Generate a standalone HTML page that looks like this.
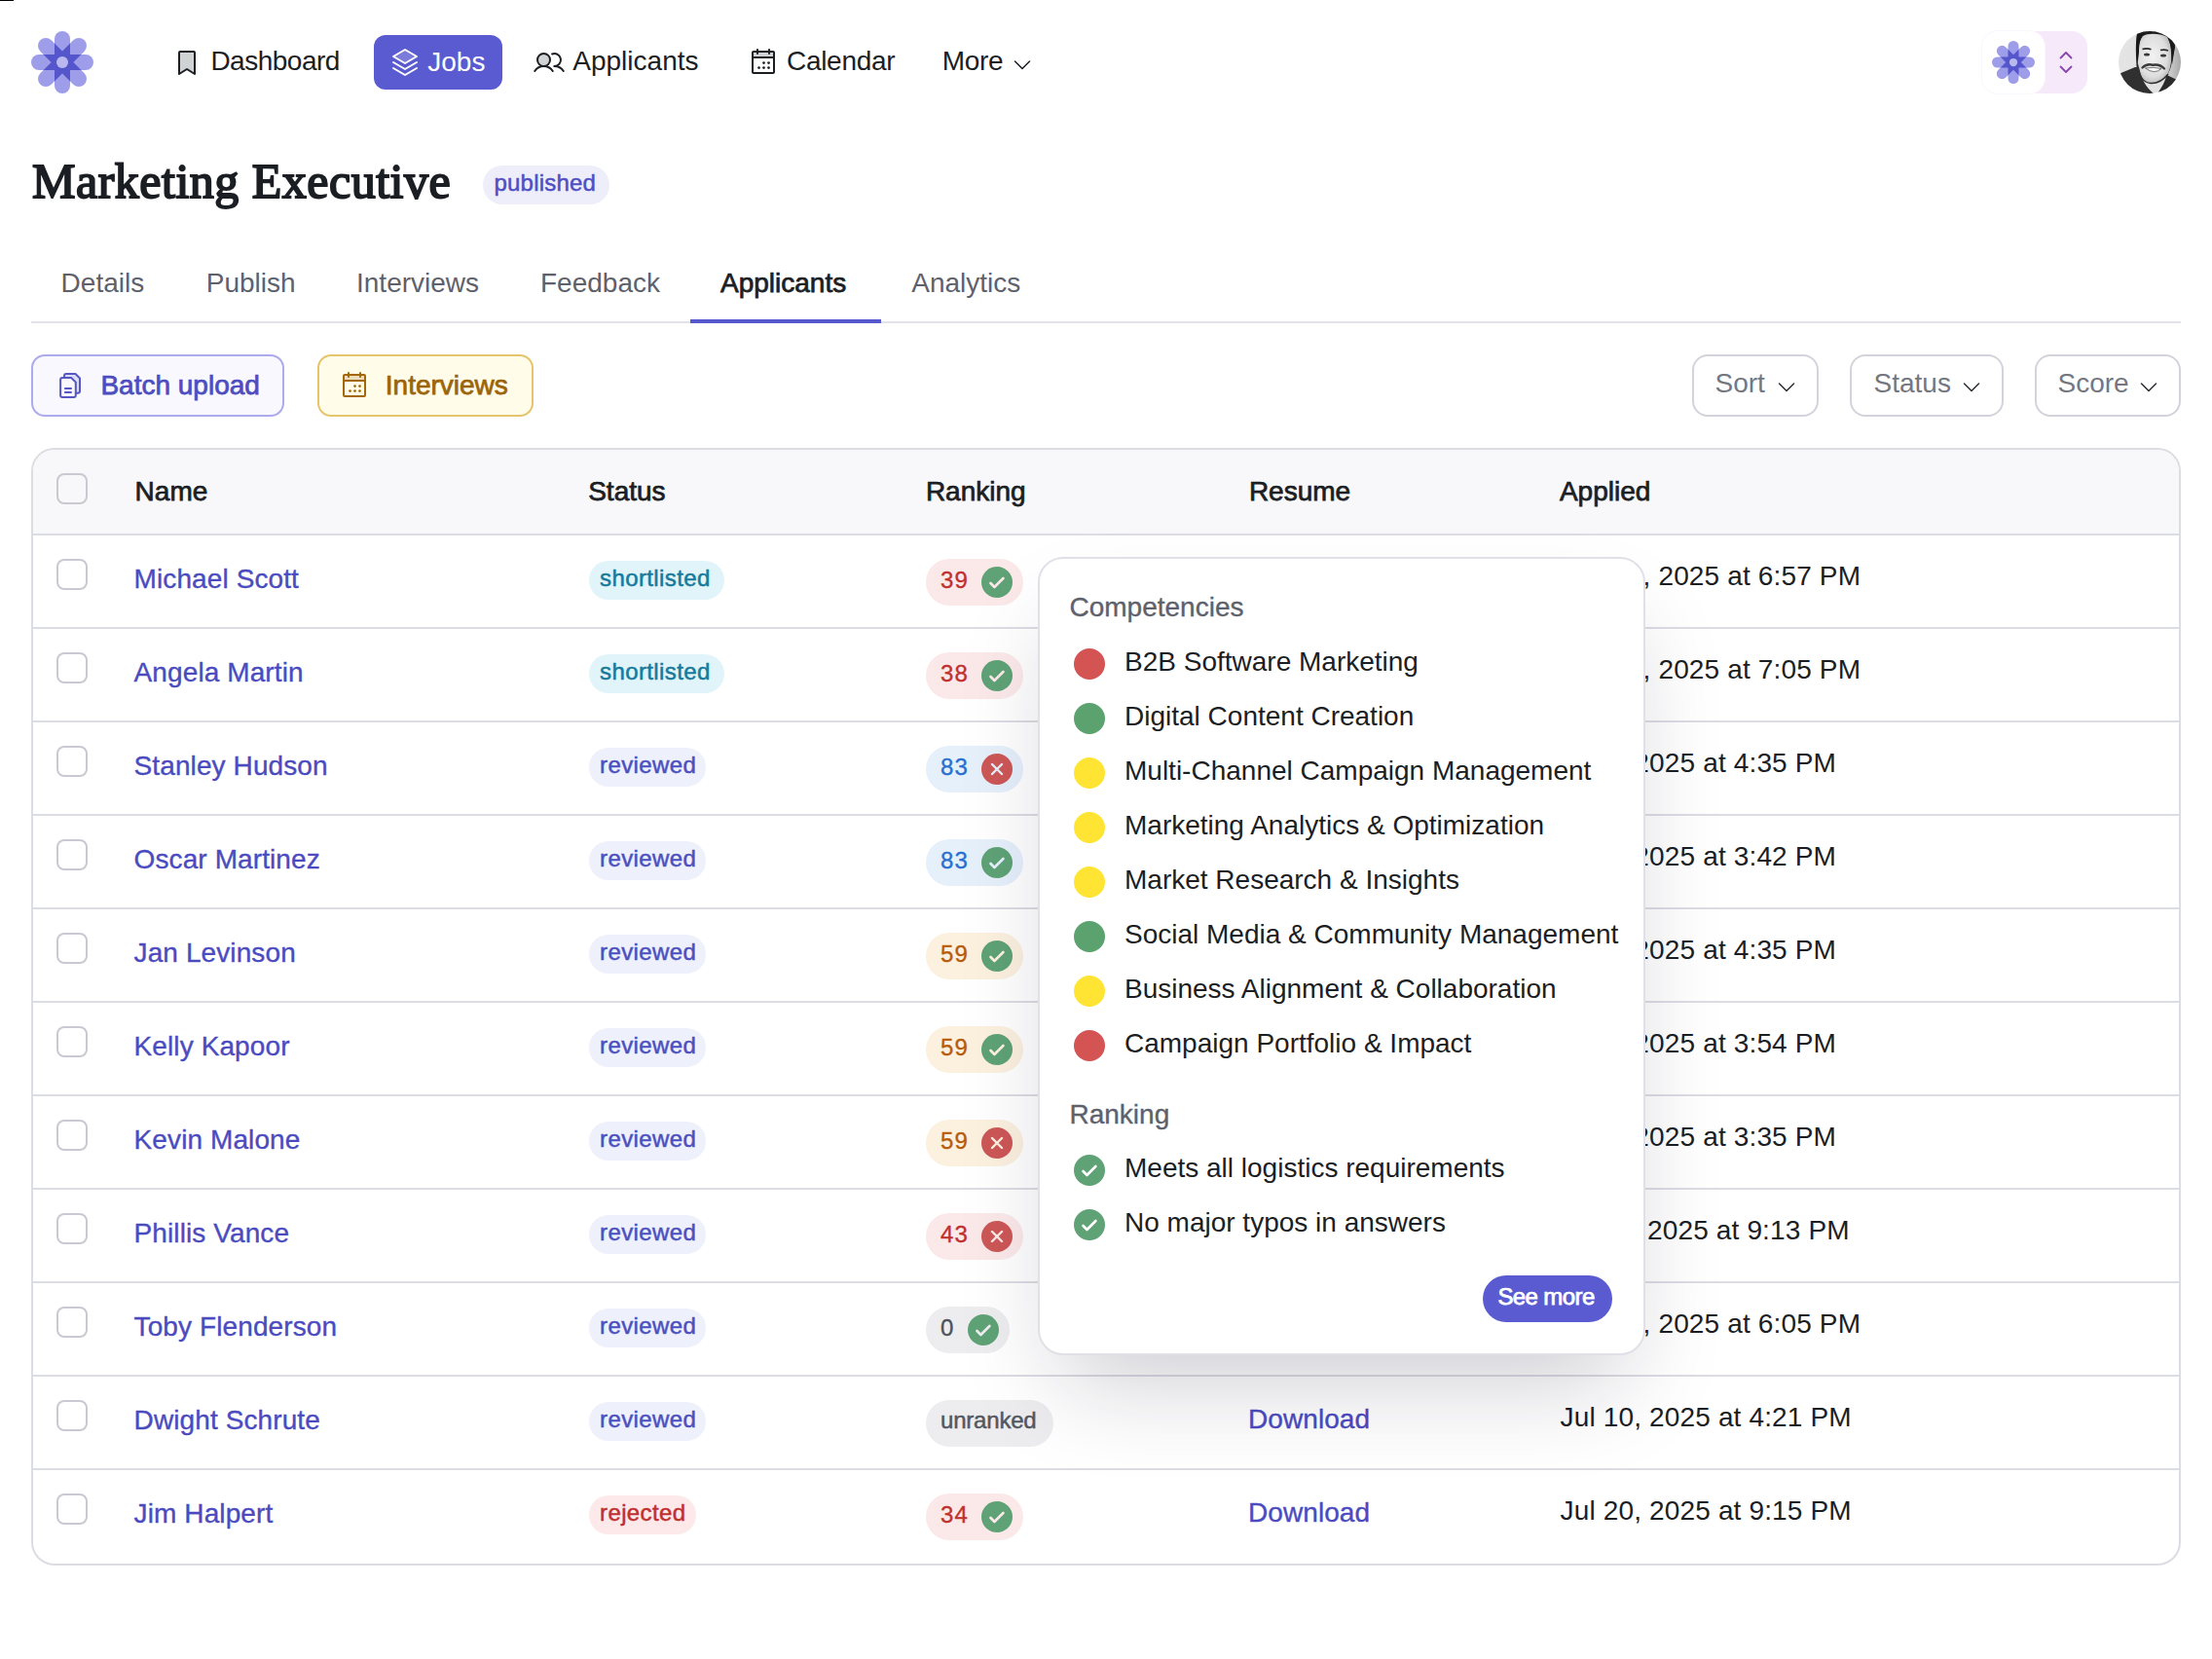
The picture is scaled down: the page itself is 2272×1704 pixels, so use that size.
<!DOCTYPE html>
<html><head><meta charset="utf-8"><title>Marketing Executive</title>
<style>
html,body{margin:0;padding:0;background:#fff;}
body{width:2272px;height:1704px;position:relative;overflow:hidden;font-family:"Liberation Sans", sans-serif;}
.t{position:absolute;white-space:nowrap;line-height:1;}
.b{position:absolute;}
@media (max-width:1200px){body{zoom:0.5;}}
</style></head><body>
<div class="b" style="left:0px;top:0px;width:14px;height:1px;background:#000"></div>
<svg class="b" style="left:30.0px;top:30.0px" width="68.0" height="68.0" viewBox="-34.0 -34.0 68.0 68.0"><defs><clipPath id="cL0"><rect x="-8" y="-32" width="16" height="64" rx="8" transform="rotate(0)"/></clipPath><clipPath id="cL45"><rect x="-8" y="-32" width="16" height="64" rx="8" transform="rotate(45)"/></clipPath><clipPath id="cL90"><rect x="-8" y="-32" width="16" height="64" rx="8" transform="rotate(90)"/></clipPath><clipPath id="cL135"><rect x="-8" y="-32" width="16" height="64" rx="8" transform="rotate(135)"/></clipPath></defs><g fill="#9d9de9"><rect x="-8" y="-32" width="16" height="64" rx="8" transform="rotate(0)"/><rect x="-8" y="-32" width="16" height="64" rx="8" transform="rotate(45)"/><rect x="-8" y="-32" width="16" height="64" rx="8" transform="rotate(90)"/><rect x="-8" y="-32" width="16" height="64" rx="8" transform="rotate(135)"/></g><g clip-path="url(#cL45)"><rect x="-8" y="-32" width="16" height="64" rx="8" transform="rotate(0)" fill="#5656cc"/></g><g clip-path="url(#cL90)"><rect x="-8" y="-32" width="16" height="64" rx="8" transform="rotate(0)" fill="#5656cc"/></g><g clip-path="url(#cL135)"><rect x="-8" y="-32" width="16" height="64" rx="8" transform="rotate(0)" fill="#5656cc"/></g><g clip-path="url(#cL90)"><rect x="-8" y="-32" width="16" height="64" rx="8" transform="rotate(45)" fill="#5656cc"/></g><g clip-path="url(#cL135)"><rect x="-8" y="-32" width="16" height="64" rx="8" transform="rotate(45)" fill="#5656cc"/></g><g clip-path="url(#cL135)"><rect x="-8" y="-32" width="16" height="64" rx="8" transform="rotate(90)" fill="#5656cc"/></g><circle r="6" fill="#b9b9f0"/></svg>
<div style="color:#1b1e23"><svg class="b" style="left:176px;top:48px" width="32" height="32" viewBox="0 0 256 256" fill="none" stroke="#1b1e23" stroke-width="16" stroke-linecap="round" stroke-linejoin="round"><path d="M192,224l-64-40L64,224V48a8,8,0,0,1,8-8H184a8,8,0,0,1,8,8Z" fill="currentColor" opacity="0.2" stroke="none"/><path d="M192,224l-64-40L64,224V48a8,8,0,0,1,8-8H184a8,8,0,0,1,8,8Z"/></svg>
</div><div class="t" style="left:216.4px;top:49.3px;font-size:28px;color:#1b1e23;letter-spacing:-0.5px">Dashboard</div>
<div class="b" style="left:384px;top:36px;width:132px;height:56px;background:#5b5bd1;border-radius:12px"></div>
<div style="color:#fff"><svg class="b" style="left:400px;top:48px" width="32" height="32" viewBox="0 0 256 256" fill="none" stroke="#fff" stroke-width="16" stroke-linecap="round" stroke-linejoin="round"><path d="M32,80,128,136l96-56L128,24Z" fill="currentColor" opacity="0.2" stroke="none"/><polyline points="32 176 128 232 224 176"/><polyline points="32 128 128 184 224 128"/><polygon points="32 80 128 136 224 80 128 24 32 80"/></svg>
</div><div class="t" style="left:439.3px;top:49.5px;font-size:28px;color:#fff;">Jobs</div>
<div style="color:#1b1e23"><svg class="b" style="left:548px;top:48px" width="32" height="32" viewBox="0 0 256 256" fill="none" stroke="#1b1e23" stroke-width="16" stroke-linecap="round" stroke-linejoin="round"><circle cx="84" cy="108" r="52" fill="currentColor" opacity="0.2" stroke="none"/><circle cx="84" cy="108" r="52"/><path d="M10.23,200a88,88,0,0,1,147.54,0"/><path d="M172,160a87.93,87.93,0,0,1,73.77,40"/><path d="M152.69,59.7A52,52,0,1,1,172,160"/></svg>
</div><div class="t" style="left:588.3px;top:49.3px;font-size:28px;color:#1b1e23;">Applicants</div>
<div style="color:#1b1e23"><svg class="b" style="left:768px;top:48px" width="32" height="32" viewBox="0 0 256 256" fill="none" stroke="#1b1e23" stroke-width="16" stroke-linecap="round" stroke-linejoin="round"><path d="M216,48V88H40V48a8,8,0,0,1,8-8H208A8,8,0,0,1,216,48Z" fill="currentColor" opacity="0.2" stroke="none"/><rect x="40" y="40" width="176" height="176" rx="8"/><line x1="176" y1="24" x2="176" y2="56"/><line x1="80" y1="24" x2="80" y2="56"/><line x1="40" y1="88" x2="216" y2="88"/><g fill="#1b1e23" stroke="none"><circle cx="132" cy="132" r="11"/><circle cx="172" cy="132" r="11"/><circle cx="92" cy="172" r="11"/><circle cx="132" cy="172" r="11"/><circle cx="172" cy="172" r="11"/></g></svg>
</div><div class="t" style="left:808.0px;top:49.3px;font-size:28px;color:#1b1e23;letter-spacing:-0.3px">Calendar</div>
<div class="t" style="left:967.7px;top:49.3px;font-size:28px;color:#1b1e23;letter-spacing:-0.3px">More</div>
<svg class="b" style="left:1038px;top:54px" width="24" height="24" viewBox="0 0 256 256" fill="none" stroke="#1b1e23" stroke-width="16" stroke-linecap="round" stroke-linejoin="round"><polyline points="208 96 128 176 48 96"/></svg>
<div class="b" style="left:2036px;top:32px;width:108px;height:64px;background:#f5e9fa;border-radius:16px"></div>
<div class="b" style="left:2036px;top:32px;width:64px;height:64px;background:#fff;border-radius:16px;box-shadow:0 0 0 1px #fbf6fd"></div>
<svg class="b" style="left:2044.0px;top:40.0px" width="48.0" height="48.0" viewBox="-34.90909090909091 -34.90909090909091 69.81818181818181 69.81818181818181"><defs><clipPath id="cS0"><rect x="-8" y="-32" width="16" height="64" rx="8" transform="rotate(0)"/></clipPath><clipPath id="cS45"><rect x="-8" y="-32" width="16" height="64" rx="8" transform="rotate(45)"/></clipPath><clipPath id="cS90"><rect x="-8" y="-32" width="16" height="64" rx="8" transform="rotate(90)"/></clipPath><clipPath id="cS135"><rect x="-8" y="-32" width="16" height="64" rx="8" transform="rotate(135)"/></clipPath></defs><g fill="#9d9de9"><rect x="-8" y="-32" width="16" height="64" rx="8" transform="rotate(0)"/><rect x="-8" y="-32" width="16" height="64" rx="8" transform="rotate(45)"/><rect x="-8" y="-32" width="16" height="64" rx="8" transform="rotate(90)"/><rect x="-8" y="-32" width="16" height="64" rx="8" transform="rotate(135)"/></g><g clip-path="url(#cS45)"><rect x="-8" y="-32" width="16" height="64" rx="8" transform="rotate(0)" fill="#5656cc"/></g><g clip-path="url(#cS90)"><rect x="-8" y="-32" width="16" height="64" rx="8" transform="rotate(0)" fill="#5656cc"/></g><g clip-path="url(#cS135)"><rect x="-8" y="-32" width="16" height="64" rx="8" transform="rotate(0)" fill="#5656cc"/></g><g clip-path="url(#cS90)"><rect x="-8" y="-32" width="16" height="64" rx="8" transform="rotate(45)" fill="#5656cc"/></g><g clip-path="url(#cS135)"><rect x="-8" y="-32" width="16" height="64" rx="8" transform="rotate(45)" fill="#5656cc"/></g><g clip-path="url(#cS135)"><rect x="-8" y="-32" width="16" height="64" rx="8" transform="rotate(90)" fill="#5656cc"/></g><circle r="6" fill="#b9b9f0"/></svg>
<svg class="b" style="left:2108px;top:48px" width="28" height="32" viewBox="0 0 28 32" fill="none" stroke="#8a45ad" stroke-width="1.8" stroke-linecap="round" stroke-linejoin="round"><polyline points="8.5,11.5 14,6 19.5,11.5"/><polyline points="8.5,20.5 14,26 19.5,20.5"/></svg>
<svg class="b" style="left:2176px;top:32px" width="64" height="64" viewBox="0 0 64 64">
<defs><clipPath id="av"><circle cx="32" cy="32" r="32"/></clipPath>
<linearGradient id="avbg" x1="0" y1="0" x2="1" y2="0"><stop offset="0" stop-color="#e4e4e4"/><stop offset="0.7" stop-color="#e2e2e2"/><stop offset="1" stop-color="#a8a8a8"/></linearGradient>
<radialGradient id="face" cx="0.45" cy="0.45" r="0.6"><stop offset="0" stop-color="#f2f2f2"/><stop offset="0.7" stop-color="#dedede"/><stop offset="1" stop-color="#b5b5b5"/></radialGradient></defs>
<g clip-path="url(#av)">
<rect width="64" height="64" fill="url(#avbg)"/>
<path d="M19,2 C22,0 30,-1 38,0 C46,1 53,5 58,14 C57,22 55,30 54,36 C52,42 50,46 48,48 L19,42 C18,30 17,14 19,2Z" fill="#1e1e1e"/>
<path d="M25,5 C30,2 42,2 50,6 C54,12 55,22 54,32 C53,40 50,48 44,52 C40,54 34,54 29,52 C23,48 20,40 19.5,30 C19,20 21,10 25,5Z" fill="url(#face)"/>
<path d="M25,3 L19,4 L18,20 L19.5,34 L21,22 C21,14 22,8 25,3Z" fill="#1a1a1a"/>
<path d="M50,6 C54,10 57,14 58,16 L55,34 L54,22 C54,14 52,10 50,6Z" fill="#1a1a1a"/>
<path d="M24.5,18.6 Q29,17 33.5,18.8" stroke="#2a2a2a" stroke-width="1.6" fill="none"/>
<path d="M43,19.6 Q47,18.5 51,20" stroke="#2a2a2a" stroke-width="1.6" fill="none"/>
<ellipse cx="29" cy="24" rx="3" ry="1.5" fill="#3a3a3a"/><ellipse cx="46" cy="25" rx="3" ry="1.5" fill="#3a3a3a"/>
<path d="M27.5,38 Q36,36.5 44,38.5 Q37,45 27.5,38Z" fill="#fafafa" stroke="#555" stroke-width="0.8"/>
<path d="M24.5,37.5 Q29,33 35.5,34.8 Q42,33.5 47,38.5" stroke="#3a3a3a" stroke-width="2.4" fill="none" stroke-linecap="round"/>
<path d="M19.5,34 C21,46 26,53 33,53.5 C40,54 46,50 51,44" stroke="#2c2c2c" stroke-width="1.4" fill="none"/>
<path d="M0,44 L17,37 L21,37 C23,48 28,58 36,64 L0,64Z" fill="#303030"/>
<path d="M40,64 C44,58 48,52 49.5,45 L58,49 L64,52 L64,64Z" fill="#2a2a2a"/>
</g></svg>
<div class="t" style="left:33px;top:160.9px;font-family:'Liberation Serif',serif;font-size:50px;letter-spacing:0.5px;-webkit-text-stroke:1.9px #1b1e23;color:#1b1e23">Marketing Executive</div>
<div class="b" style="left:496px;top:170px;width:130px;height:40px;background:#eeeefb;border-radius:20px"></div>
<div class="t" style="left:507.5px;top:176.0px;font-size:24px;-webkit-text-stroke:0.5px #4f4fc4;color:#4f4fc4;letter-spacing:0.2px">published</div>
<div class="t" style="left:62.6px;top:277.0px;font-size:28px;color:#5e616b;">Details</div>
<div class="t" style="left:211.8px;top:277.0px;font-size:28px;color:#5e616b;">Publish</div>
<div class="t" style="left:366.0px;top:277.0px;font-size:28px;color:#5e616b;">Interviews</div>
<div class="t" style="left:555.0px;top:277.0px;font-size:28px;color:#5e616b;">Feedback</div>
<div class="t" style="left:936.3px;top:277.0px;font-size:28px;color:#5e616b;">Analytics</div>
<div class="t" style="left:740.0px;top:277.0px;font-size:28px;-webkit-text-stroke:0.75px #1b1e23;color:#1b1e23;">Applicants</div>
<div class="b" style="left:32px;top:330px;width:2208px;height:2px;background:#e2e2e8"></div>
<div class="b" style="left:709px;top:328px;width:196px;height:4px;background:#5757ce"></div>
<div class="b" style="left:32px;top:364px;width:260px;height:64px;background:#f8f8fe;border:2px solid #ababee;box-sizing:border-box;border-radius:14px"></div>
<svg class="b" style="left:56px;top:378px" width="32" height="32" viewBox="56 378 32 32" fill="none" stroke="#5656c4" stroke-width="2" stroke-linecap="round" stroke-linejoin="round"><path d="M66,388 V386 a2,2 0 0 1 2,-2 H77.5 L82,388.5 V401.8 a2,2 0 0 1 -2,2 H77.8 V392.6 L73.2,388 Z" fill="#dcdcf4" stroke="none"/><path d="M66,388 V386 a2,2 0 0 1 2,-2 H77.5 L82,388.5 V401.8 a2,2 0 0 1 -2,2 H77.8"/><path d="M73.2,388 H64.1 a2,2 0 0 0 -2,2 V405.9 a2,2 0 0 0 2,2 H75.8 a2,2 0 0 0 2,-2 V392.6 Z"/><line x1="66.9" y1="398.9" x2="73" y2="398.9"/><line x1="66.9" y1="403" x2="73" y2="403"/></svg>
<div class="t" style="left:103.4px;top:381.9px;font-size:28px;-webkit-text-stroke:0.75px #4d4dbf;color:#4d4dbf;">Batch upload</div>
<div class="b" style="left:326px;top:364px;width:222px;height:64px;background:#fffce9;border:2px solid #e6c46a;box-sizing:border-box;border-radius:14px"></div>
<div style="color:#a2680a"><svg class="b" style="left:348px;top:380px" width="32" height="32" viewBox="0 0 256 256" fill="none" stroke="#a2680a" stroke-width="16" stroke-linecap="round" stroke-linejoin="round"><path d="M216,48V88H40V48a8,8,0,0,1,8-8H208A8,8,0,0,1,216,48Z" fill="currentColor" opacity="0.2" stroke="none"/><rect x="40" y="40" width="176" height="176" rx="8"/><line x1="176" y1="24" x2="176" y2="56"/><line x1="80" y1="24" x2="80" y2="56"/><line x1="40" y1="88" x2="216" y2="88"/><g fill="#a2680a" stroke="none"><circle cx="132" cy="132" r="11"/><circle cx="172" cy="132" r="11"/><circle cx="92" cy="172" r="11"/><circle cx="132" cy="172" r="11"/><circle cx="172" cy="172" r="11"/></g></svg>
</div><div class="t" style="left:395.8px;top:381.9px;font-size:28px;-webkit-text-stroke:0.75px #9c6408;color:#9c6408;">Interviews</div>
<div class="b" style="left:1738px;top:364px;width:130px;height:64px;background:#fff;border:2px solid #d3d3db;box-sizing:border-box;border-radius:16px"></div>
<div class="t" style="left:1761.5px;top:380.1px;font-size:28px;color:#74777f;">Sort</div>
<svg class="b" style="left:1823px;top:385px" width="24" height="24" viewBox="0 0 256 256" fill="none" stroke="#2b2e34" stroke-width="16" stroke-linecap="round" stroke-linejoin="round"><polyline points="208 96 128 176 48 96"/></svg>
<div class="b" style="left:1900px;top:364px;width:158px;height:64px;background:#fff;border:2px solid #d3d3db;box-sizing:border-box;border-radius:16px"></div>
<div class="t" style="left:1924.5px;top:380.1px;font-size:28px;color:#74777f;">Status</div>
<svg class="b" style="left:2013px;top:385px" width="24" height="24" viewBox="0 0 256 256" fill="none" stroke="#2b2e34" stroke-width="16" stroke-linecap="round" stroke-linejoin="round"><polyline points="208 96 128 176 48 96"/></svg>
<div class="b" style="left:2090px;top:364px;width:150px;height:64px;background:#fff;border:2px solid #d3d3db;box-sizing:border-box;border-radius:16px"></div>
<div class="t" style="left:2113.5px;top:380.1px;font-size:28px;color:#74777f;">Score</div>
<svg class="b" style="left:2195px;top:385px" width="24" height="24" viewBox="0 0 256 256" fill="none" stroke="#2b2e34" stroke-width="16" stroke-linecap="round" stroke-linejoin="round"><polyline points="208 96 128 176 48 96"/></svg>
<div class="b" style="left:32px;top:460px;width:2208px;height:1148px;background:#fff;border:2px solid #dcdce3;box-sizing:border-box;border-radius:24px;overflow:hidden"></div>
<div class="b" style="left:34px;top:462px;width:2204px;height:86px;background:#f8f8fa;border-radius:22px 22px 0 0"></div>
<div class="b" style="left:34px;top:548px;width:2204px;height:2px;background:#dcdce3"></div>
<div class="b" style="left:58px;top:486px;width:32px;height:32px;border:2px solid #c9c9d2;box-sizing:border-box;border-radius:8px;background:transparent"></div>
<div class="t" style="left:138.6px;top:490.5px;font-size:28px;-webkit-text-stroke:0.75px #1b1e23;color:#1b1e23;">Name</div>
<div class="t" style="left:604.2px;top:490.5px;font-size:28px;-webkit-text-stroke:0.75px #1b1e23;color:#1b1e23;">Status</div>
<div class="t" style="left:950.9px;top:490.5px;font-size:28px;-webkit-text-stroke:0.75px #1b1e23;color:#1b1e23;">Ranking</div>
<div class="t" style="left:1282.9px;top:490.5px;font-size:28px;-webkit-text-stroke:0.75px #1b1e23;color:#1b1e23;">Resume</div>
<div class="t" style="left:1601.9px;top:490.5px;font-size:28px;-webkit-text-stroke:0.75px #1b1e23;color:#1b1e23;">Applied</div>
<div class="b" style="left:34px;top:644px;width:2204px;height:2px;background:#dcdce3"></div>
<div class="b" style="left:58px;top:574px;width:32px;height:32px;border:2px solid #c9c9d2;box-sizing:border-box;border-radius:8px;background:#fff"></div>
<div class="t" style="left:137.6px;top:580.7px;font-size:28px;-webkit-text-stroke:0.35px #4b4bc0;color:#4b4bc0;letter-spacing:0.1px">Michael Scott</div>
<div class="b" style="left:605px;top:576px;width:139px;height:40px;background:#e1f4f9;border-radius:20px"></div>
<div class="t" style="left:616.0px;top:581.6px;font-size:24px;-webkit-text-stroke:0.5px #167a9c;color:#167a9c;letter-spacing:0.4px">shortlisted</div>
<div class="b" style="left:951px;top:574px;width:100px;height:48px;background:#fbe9ea;border-radius:24px"></div>
<div class="t" style="left:966.1px;top:584.0px;font-size:24px;-webkit-text-stroke:0.35px #c0302f;color:#c0302f;letter-spacing:1px">39</div>
<svg class="b" style="left:1007.6px;top:582px" width="32" height="32" viewBox="0 0 32 32"><circle cx="16" cy="16" r="16" fill="#5fa276"/><polyline points="9.5,17 13.4,21 22.4,12" fill="none" stroke="#fbe9ea" stroke-width="2.6" stroke-linecap="round" stroke-linejoin="round"/></svg>
<div class="t" style="left:1602.6px;top:578.3px;font-size:28px;color:#1b1e23;letter-spacing:0.15px">Jun 14, 2025 at 6:57 PM</div>
<div class="b" style="left:34px;top:740px;width:2204px;height:2px;background:#dcdce3"></div>
<div class="b" style="left:58px;top:670px;width:32px;height:32px;border:2px solid #c9c9d2;box-sizing:border-box;border-radius:8px;background:#fff"></div>
<div class="t" style="left:137.6px;top:676.7px;font-size:28px;-webkit-text-stroke:0.35px #4b4bc0;color:#4b4bc0;letter-spacing:0.1px">Angela Martin</div>
<div class="b" style="left:605px;top:672px;width:139px;height:40px;background:#e1f4f9;border-radius:20px"></div>
<div class="t" style="left:616.0px;top:677.6px;font-size:24px;-webkit-text-stroke:0.5px #167a9c;color:#167a9c;letter-spacing:0.4px">shortlisted</div>
<div class="b" style="left:951px;top:670px;width:100px;height:48px;background:#fbe9ea;border-radius:24px"></div>
<div class="t" style="left:966.1px;top:680.0px;font-size:24px;-webkit-text-stroke:0.35px #c0302f;color:#c0302f;letter-spacing:1px">38</div>
<svg class="b" style="left:1007.6px;top:678px" width="32" height="32" viewBox="0 0 32 32"><circle cx="16" cy="16" r="16" fill="#5fa276"/><polyline points="9.5,17 13.4,21 22.4,12" fill="none" stroke="#fbe9ea" stroke-width="2.6" stroke-linecap="round" stroke-linejoin="round"/></svg>
<div class="t" style="left:1602.6px;top:674.3px;font-size:28px;color:#1b1e23;letter-spacing:0.15px">Jun 14, 2025 at 7:05 PM</div>
<div class="b" style="left:34px;top:836px;width:2204px;height:2px;background:#dcdce3"></div>
<div class="b" style="left:58px;top:766px;width:32px;height:32px;border:2px solid #c9c9d2;box-sizing:border-box;border-radius:8px;background:#fff"></div>
<div class="t" style="left:137.6px;top:772.7px;font-size:28px;-webkit-text-stroke:0.35px #4b4bc0;color:#4b4bc0;letter-spacing:0.1px">Stanley Hudson</div>
<div class="b" style="left:605px;top:768px;width:120px;height:40px;background:#eef0fc;border-radius:20px"></div>
<div class="t" style="left:616.0px;top:773.6px;font-size:24px;-webkit-text-stroke:0.5px #4b50c0;color:#4b50c0;letter-spacing:0.4px">reviewed</div>
<div class="b" style="left:951px;top:766px;width:100px;height:48px;background:#e6f0fb;border-radius:24px"></div>
<div class="t" style="left:966.1px;top:776.0px;font-size:24px;-webkit-text-stroke:0.35px #2a6fd0;color:#2a6fd0;letter-spacing:1px">83</div>
<svg class="b" style="left:1007.6px;top:774px" width="32" height="32" viewBox="0 0 32 32"><circle cx="16" cy="16" r="16" fill="#cd5757"/><path d="M11,11 L21,21 M21,11 L11,21" fill="none" stroke="#e6f0fb" stroke-width="2.4" stroke-linecap="round"/></svg>
<div class="t" style="left:1602.6px;top:770.3px;font-size:28px;color:#1b1e23;letter-spacing:0.15px">Jul 9, 2025 at 4:35 PM</div>
<div class="b" style="left:34px;top:932px;width:2204px;height:2px;background:#dcdce3"></div>
<div class="b" style="left:58px;top:862px;width:32px;height:32px;border:2px solid #c9c9d2;box-sizing:border-box;border-radius:8px;background:#fff"></div>
<div class="t" style="left:137.6px;top:868.7px;font-size:28px;-webkit-text-stroke:0.35px #4b4bc0;color:#4b4bc0;letter-spacing:0.1px">Oscar Martinez</div>
<div class="b" style="left:605px;top:864px;width:120px;height:40px;background:#eef0fc;border-radius:20px"></div>
<div class="t" style="left:616.0px;top:869.6px;font-size:24px;-webkit-text-stroke:0.5px #4b50c0;color:#4b50c0;letter-spacing:0.4px">reviewed</div>
<div class="b" style="left:951px;top:862px;width:100px;height:48px;background:#e6f0fb;border-radius:24px"></div>
<div class="t" style="left:966.1px;top:872.0px;font-size:24px;-webkit-text-stroke:0.35px #2a6fd0;color:#2a6fd0;letter-spacing:1px">83</div>
<svg class="b" style="left:1007.6px;top:870px" width="32" height="32" viewBox="0 0 32 32"><circle cx="16" cy="16" r="16" fill="#5fa276"/><polyline points="9.5,17 13.4,21 22.4,12" fill="none" stroke="#e6f0fb" stroke-width="2.6" stroke-linecap="round" stroke-linejoin="round"/></svg>
<div class="t" style="left:1602.6px;top:866.3px;font-size:28px;color:#1b1e23;letter-spacing:0.15px">Jul 9, 2025 at 3:42 PM</div>
<div class="b" style="left:34px;top:1028px;width:2204px;height:2px;background:#dcdce3"></div>
<div class="b" style="left:58px;top:958px;width:32px;height:32px;border:2px solid #c9c9d2;box-sizing:border-box;border-radius:8px;background:#fff"></div>
<div class="t" style="left:137.6px;top:964.7px;font-size:28px;-webkit-text-stroke:0.35px #4b4bc0;color:#4b4bc0;letter-spacing:0.1px">Jan Levinson</div>
<div class="b" style="left:605px;top:960px;width:120px;height:40px;background:#eef0fc;border-radius:20px"></div>
<div class="t" style="left:616.0px;top:965.6px;font-size:24px;-webkit-text-stroke:0.5px #4b50c0;color:#4b50c0;letter-spacing:0.4px">reviewed</div>
<div class="b" style="left:951px;top:958px;width:100px;height:48px;background:#fcf0df;border-radius:24px"></div>
<div class="t" style="left:966.1px;top:968.0px;font-size:24px;-webkit-text-stroke:0.35px #b85c0a;color:#b85c0a;letter-spacing:1px">59</div>
<svg class="b" style="left:1007.6px;top:966px" width="32" height="32" viewBox="0 0 32 32"><circle cx="16" cy="16" r="16" fill="#5fa276"/><polyline points="9.5,17 13.4,21 22.4,12" fill="none" stroke="#fcf0df" stroke-width="2.6" stroke-linecap="round" stroke-linejoin="round"/></svg>
<div class="t" style="left:1602.6px;top:962.3px;font-size:28px;color:#1b1e23;letter-spacing:0.15px">Jul 9, 2025 at 4:35 PM</div>
<div class="b" style="left:34px;top:1124px;width:2204px;height:2px;background:#dcdce3"></div>
<div class="b" style="left:58px;top:1054px;width:32px;height:32px;border:2px solid #c9c9d2;box-sizing:border-box;border-radius:8px;background:#fff"></div>
<div class="t" style="left:137.6px;top:1060.7px;font-size:28px;-webkit-text-stroke:0.35px #4b4bc0;color:#4b4bc0;letter-spacing:0.1px">Kelly Kapoor</div>
<div class="b" style="left:605px;top:1056px;width:120px;height:40px;background:#eef0fc;border-radius:20px"></div>
<div class="t" style="left:616.0px;top:1061.6px;font-size:24px;-webkit-text-stroke:0.5px #4b50c0;color:#4b50c0;letter-spacing:0.4px">reviewed</div>
<div class="b" style="left:951px;top:1054px;width:100px;height:48px;background:#fcf0df;border-radius:24px"></div>
<div class="t" style="left:966.1px;top:1064.0px;font-size:24px;-webkit-text-stroke:0.35px #b85c0a;color:#b85c0a;letter-spacing:1px">59</div>
<svg class="b" style="left:1007.6px;top:1062px" width="32" height="32" viewBox="0 0 32 32"><circle cx="16" cy="16" r="16" fill="#5fa276"/><polyline points="9.5,17 13.4,21 22.4,12" fill="none" stroke="#fcf0df" stroke-width="2.6" stroke-linecap="round" stroke-linejoin="round"/></svg>
<div class="t" style="left:1602.6px;top:1058.3px;font-size:28px;color:#1b1e23;letter-spacing:0.15px">Jul 9, 2025 at 3:54 PM</div>
<div class="b" style="left:34px;top:1220px;width:2204px;height:2px;background:#dcdce3"></div>
<div class="b" style="left:58px;top:1150px;width:32px;height:32px;border:2px solid #c9c9d2;box-sizing:border-box;border-radius:8px;background:#fff"></div>
<div class="t" style="left:137.6px;top:1156.7px;font-size:28px;-webkit-text-stroke:0.35px #4b4bc0;color:#4b4bc0;letter-spacing:0.1px">Kevin Malone</div>
<div class="b" style="left:605px;top:1152px;width:120px;height:40px;background:#eef0fc;border-radius:20px"></div>
<div class="t" style="left:616.0px;top:1157.6px;font-size:24px;-webkit-text-stroke:0.5px #4b50c0;color:#4b50c0;letter-spacing:0.4px">reviewed</div>
<div class="b" style="left:951px;top:1150px;width:100px;height:48px;background:#fcf0df;border-radius:24px"></div>
<div class="t" style="left:966.1px;top:1160.0px;font-size:24px;-webkit-text-stroke:0.35px #b85c0a;color:#b85c0a;letter-spacing:1px">59</div>
<svg class="b" style="left:1007.6px;top:1158px" width="32" height="32" viewBox="0 0 32 32"><circle cx="16" cy="16" r="16" fill="#cd5757"/><path d="M11,11 L21,21 M21,11 L11,21" fill="none" stroke="#fcf0df" stroke-width="2.4" stroke-linecap="round"/></svg>
<div class="t" style="left:1602.6px;top:1154.3px;font-size:28px;color:#1b1e23;letter-spacing:0.15px">Jul 9, 2025 at 3:35 PM</div>
<div class="b" style="left:34px;top:1316px;width:2204px;height:2px;background:#dcdce3"></div>
<div class="b" style="left:58px;top:1246px;width:32px;height:32px;border:2px solid #c9c9d2;box-sizing:border-box;border-radius:8px;background:#fff"></div>
<div class="t" style="left:137.6px;top:1252.7px;font-size:28px;-webkit-text-stroke:0.35px #4b4bc0;color:#4b4bc0;letter-spacing:0.1px">Phillis Vance</div>
<div class="b" style="left:605px;top:1248px;width:120px;height:40px;background:#eef0fc;border-radius:20px"></div>
<div class="t" style="left:616.0px;top:1253.6px;font-size:24px;-webkit-text-stroke:0.5px #4b50c0;color:#4b50c0;letter-spacing:0.4px">reviewed</div>
<div class="b" style="left:951px;top:1246px;width:100px;height:48px;background:#fbe9ea;border-radius:24px"></div>
<div class="t" style="left:966.1px;top:1256.0px;font-size:24px;-webkit-text-stroke:0.35px #c0302f;color:#c0302f;letter-spacing:1px">43</div>
<svg class="b" style="left:1007.6px;top:1254px" width="32" height="32" viewBox="0 0 32 32"><circle cx="16" cy="16" r="16" fill="#cd5757"/><path d="M11,11 L21,21 M21,11 L11,21" fill="none" stroke="#fbe9ea" stroke-width="2.4" stroke-linecap="round"/></svg>
<div class="t" style="left:1602.6px;top:1250.3px;font-size:28px;color:#1b1e23;letter-spacing:0.15px">Jul 11, 2025 at 9:13 PM</div>
<div class="b" style="left:34px;top:1412px;width:2204px;height:2px;background:#dcdce3"></div>
<div class="b" style="left:58px;top:1342px;width:32px;height:32px;border:2px solid #c9c9d2;box-sizing:border-box;border-radius:8px;background:#fff"></div>
<div class="t" style="left:137.6px;top:1348.7px;font-size:28px;-webkit-text-stroke:0.35px #4b4bc0;color:#4b4bc0;letter-spacing:0.1px">Toby Flenderson</div>
<div class="b" style="left:605px;top:1344px;width:120px;height:40px;background:#eef0fc;border-radius:20px"></div>
<div class="t" style="left:616.0px;top:1349.6px;font-size:24px;-webkit-text-stroke:0.5px #4b50c0;color:#4b50c0;letter-spacing:0.4px">reviewed</div>
<div class="b" style="left:951px;top:1342px;width:86px;height:48px;background:#ededf0;border-radius:24px"></div>
<div class="t" style="left:966.1px;top:1352.0px;font-size:24px;-webkit-text-stroke:0.35px #4f525b;color:#4f525b;letter-spacing:1px">0</div>
<svg class="b" style="left:994.1px;top:1350px" width="32" height="32" viewBox="0 0 32 32"><circle cx="16" cy="16" r="16" fill="#5fa276"/><polyline points="9.5,17 13.4,21 22.4,12" fill="none" stroke="#ededf0" stroke-width="2.6" stroke-linecap="round" stroke-linejoin="round"/></svg>
<div class="t" style="left:1602.6px;top:1346.3px;font-size:28px;color:#1b1e23;letter-spacing:0.15px">Jun 14, 2025 at 6:05 PM</div>
<div class="b" style="left:34px;top:1508px;width:2204px;height:2px;background:#dcdce3"></div>
<div class="b" style="left:58px;top:1438px;width:32px;height:32px;border:2px solid #c9c9d2;box-sizing:border-box;border-radius:8px;background:#fff"></div>
<div class="t" style="left:137.6px;top:1444.7px;font-size:28px;-webkit-text-stroke:0.35px #4b4bc0;color:#4b4bc0;letter-spacing:0.1px">Dwight Schrute</div>
<div class="b" style="left:605px;top:1440px;width:120px;height:40px;background:#eef0fc;border-radius:20px"></div>
<div class="t" style="left:616.0px;top:1445.6px;font-size:24px;-webkit-text-stroke:0.5px #4b50c0;color:#4b50c0;letter-spacing:0.4px">reviewed</div>
<div class="b" style="left:951px;top:1438px;width:131px;height:48px;background:#ededf0;border-radius:24px"></div>
<div class="t" style="left:966.0px;top:1447.4px;font-size:24px;-webkit-text-stroke:0.5px #545761;color:#545761;letter-spacing:-0.2px">unranked</div>
<div class="t" style="left:1281.9px;top:1444.0px;font-size:28px;-webkit-text-stroke:0.35px #4b4bc0;color:#4b4bc0;letter-spacing:0.1px">Download</div>
<div class="t" style="left:1602.6px;top:1442.3px;font-size:28px;color:#1b1e23;letter-spacing:0.15px">Jul 10, 2025 at 4:21 PM</div>
<div class="b" style="left:58px;top:1534px;width:32px;height:32px;border:2px solid #c9c9d2;box-sizing:border-box;border-radius:8px;background:#fff"></div>
<div class="t" style="left:137.6px;top:1540.7px;font-size:28px;-webkit-text-stroke:0.35px #4b4bc0;color:#4b4bc0;letter-spacing:0.1px">Jim Halpert</div>
<div class="b" style="left:605px;top:1536px;width:110px;height:40px;background:#fde9ea;border-radius:20px"></div>
<div class="t" style="left:616.0px;top:1541.6px;font-size:24px;-webkit-text-stroke:0.5px #c0302f;color:#c0302f;letter-spacing:0.4px">rejected</div>
<div class="b" style="left:951px;top:1534px;width:100px;height:48px;background:#fbe9ea;border-radius:24px"></div>
<div class="t" style="left:966.1px;top:1544.0px;font-size:24px;-webkit-text-stroke:0.35px #c0302f;color:#c0302f;letter-spacing:1px">34</div>
<svg class="b" style="left:1007.6px;top:1542px" width="32" height="32" viewBox="0 0 32 32"><circle cx="16" cy="16" r="16" fill="#5fa276"/><polyline points="9.5,17 13.4,21 22.4,12" fill="none" stroke="#fbe9ea" stroke-width="2.6" stroke-linecap="round" stroke-linejoin="round"/></svg>
<div class="t" style="left:1281.9px;top:1540.0px;font-size:28px;-webkit-text-stroke:0.35px #4b4bc0;color:#4b4bc0;letter-spacing:0.1px">Download</div>
<div class="t" style="left:1602.6px;top:1538.3px;font-size:28px;color:#1b1e23;letter-spacing:0.15px">Jul 20, 2025 at 9:15 PM</div>
<div class="b" style="left:1066px;top:572px;width:624px;height:820px;background:#fff;border:2px solid #e0e0e7;box-sizing:border-box;border-radius:26px;box-shadow:0 50px 100px -24px rgba(20,20,45,0.21)"></div>
<div class="t" style="left:1098.5px;top:610.3px;font-size:28px;-webkit-text-stroke:0.35px #5e616b;color:#5e616b;">Competencies</div>
<div class="b" style="left:1103px;top:666px;width:32px;height:32px;background:#d45353;border-radius:50%"></div>
<div class="t" style="left:1155.0px;top:666.3px;font-size:28px;color:#1b1e23;">B2B Software Marketing</div>
<div class="b" style="left:1103px;top:722px;width:32px;height:32px;background:#5ba26f;border-radius:50%"></div>
<div class="t" style="left:1155.0px;top:722.3px;font-size:28px;color:#1b1e23;">Digital Content Creation</div>
<div class="b" style="left:1103px;top:778px;width:32px;height:32px;background:#ffe433;border-radius:50%"></div>
<div class="t" style="left:1155.0px;top:778.3px;font-size:28px;color:#1b1e23;">Multi-Channel Campaign Management</div>
<div class="b" style="left:1103px;top:834px;width:32px;height:32px;background:#ffe433;border-radius:50%"></div>
<div class="t" style="left:1155.0px;top:834.3px;font-size:28px;color:#1b1e23;">Marketing Analytics &amp; Optimization</div>
<div class="b" style="left:1103px;top:890px;width:32px;height:32px;background:#ffe433;border-radius:50%"></div>
<div class="t" style="left:1155.0px;top:890.3px;font-size:28px;color:#1b1e23;">Market Research &amp; Insights</div>
<div class="b" style="left:1103px;top:946px;width:32px;height:32px;background:#5ba26f;border-radius:50%"></div>
<div class="t" style="left:1155.0px;top:946.3px;font-size:28px;color:#1b1e23;">Social Media &amp; Community Management</div>
<div class="b" style="left:1103px;top:1002px;width:32px;height:32px;background:#ffe433;border-radius:50%"></div>
<div class="t" style="left:1155.0px;top:1002.3px;font-size:28px;color:#1b1e23;">Business Alignment &amp; Collaboration</div>
<div class="b" style="left:1103px;top:1058px;width:32px;height:32px;background:#d45353;border-radius:50%"></div>
<div class="t" style="left:1155.0px;top:1058.3px;font-size:28px;color:#1b1e23;">Campaign Portfolio &amp; Impact</div>
<div class="t" style="left:1098.5px;top:1131.3px;font-size:28px;-webkit-text-stroke:0.35px #5e616b;color:#5e616b;">Ranking</div>
<svg class="b" style="left:1103px;top:1186px" width="32" height="32" viewBox="0 0 32 32"><circle cx="16" cy="16" r="16" fill="#5fa276"/><polyline points="9.5,17 13.4,21 22.4,12" fill="none" stroke="#fff" stroke-width="2.6" stroke-linecap="round" stroke-linejoin="round"/></svg>
<div class="t" style="left:1155.0px;top:1186.3px;font-size:28px;color:#1b1e23;">Meets all logistics requirements</div>
<svg class="b" style="left:1103px;top:1242px" width="32" height="32" viewBox="0 0 32 32"><circle cx="16" cy="16" r="16" fill="#5fa276"/><polyline points="9.5,17 13.4,21 22.4,12" fill="none" stroke="#fff" stroke-width="2.6" stroke-linecap="round" stroke-linejoin="round"/></svg>
<div class="t" style="left:1155.0px;top:1242.3px;font-size:28px;color:#1b1e23;">No major typos in answers</div>
<div class="b" style="left:1523px;top:1310px;width:133px;height:48px;background:#5b5bd1;border-radius:24px"></div>
<div class="t" style="left:1538.4px;top:1320.1px;font-size:24px;-webkit-text-stroke:0.75px #fff;color:#fff;letter-spacing:-0.6px">See more</div>

</body></html>
